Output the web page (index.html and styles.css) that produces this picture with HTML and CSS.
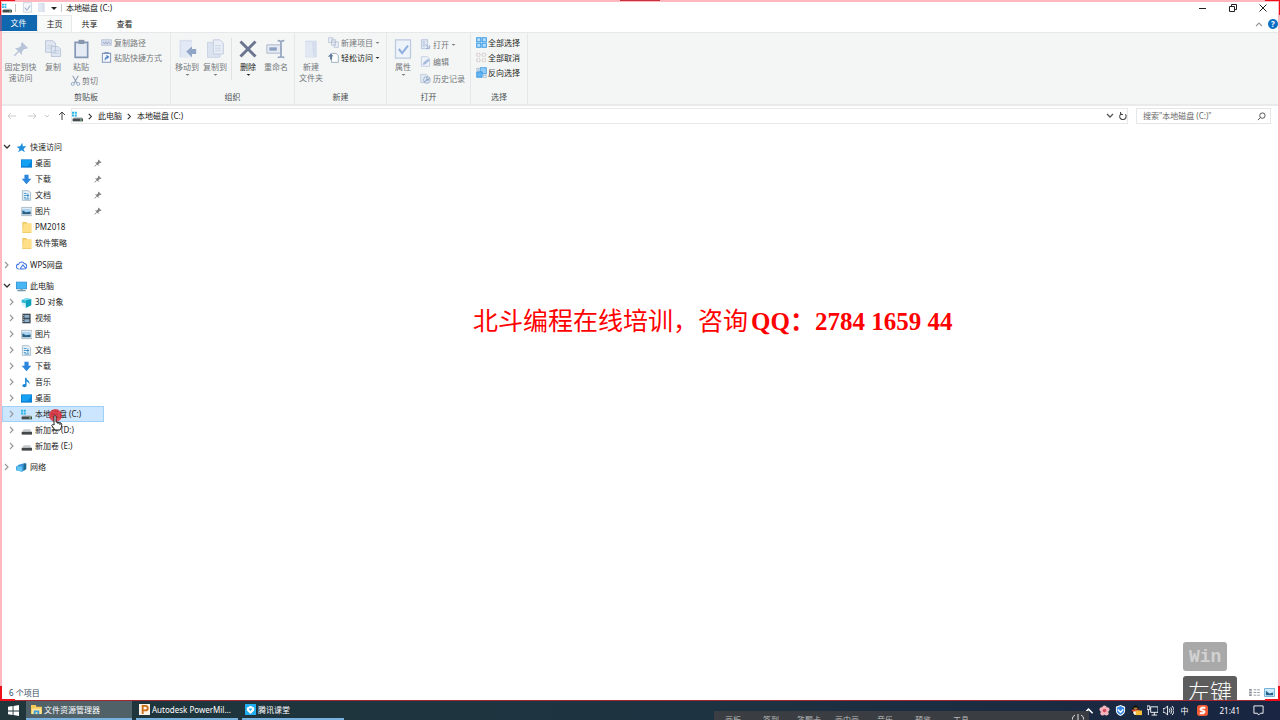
FILE: index.html
```html
<!DOCTYPE html>
<html lang="zh-CN">
<head>
<meta charset="utf-8">
<title>本地磁盘 (C:)</title>
<link rel="stylesheet" href="styles.css">
</head>
<body>
<svg class="defs" aria-hidden="true">
  <symbol id="drive-c" viewBox="0 0 16 16"><path d="M0 1h3v3H0zM4 1h3v3H4zM0 5h3v3H0zM4 5h3v3H4z" fill="#25b5e8"/><path d="M3 9h11l2 3v3H1v-3z" fill="#b9bec1"/><path d="M1 11h15v4H1z" fill="#454a4d"/><path d="M12 12h2v2h-2z" fill="#7de08b"/></symbol>
  <symbol id="drive" viewBox="0 0 16 16"><path d="M4 6h9l3 5H1z" fill="#c5c9cb"/><path d="M1 10h15v4H1z" fill="#42474a"/></symbol>
  <symbol id="star" viewBox="0 0 16 16"><path d="M9 1l1 5 5 0-4 4 2 5-5-3-5 3 2-5-4-3 5-1z" fill="#2190dd"/></symbol>
  <symbol id="desktop" viewBox="0 0 16 16"><path d="M0 2h16v12H0z" fill="#087bd2"/><path d="M1 3h14v9H1z" fill="#16a2f3"/><path d="M9 12L15 5v7z" fill="#0788dc"/></symbol>
  <symbol id="download" viewBox="0 0 16 16"><path d="M5 1h6v6h4l-7 8-7-8h4z" fill="#2b86dd"/></symbol>
  <symbol id="document" viewBox="0 0 16 16"><path d="M2 1h9l3 3v11H2z" fill="#e9f4fa" stroke="#89a4b5"/><path d="M4 5h4M4 8h8M4 11h3M10 5v7M5 13h7" stroke="#3d8dc2" stroke-width="1.3" fill="none"/></symbol>
  <symbol id="picture" viewBox="0 0 16 16"><path d="M1 2h15v12H1z" fill="#f3f7f9" stroke="#8ea0ac"/><path d="M2 4h12v8H2z" fill="#a8d3f3"/><path d="M2 6l5 3 7-1v4H2z" fill="#2a6083"/></symbol>
  <symbol id="folder" viewBox="0 0 16 16"><path d="M2 0h6l1 2h6v14H2z" fill="#edc75e"/><path d="M4 2h11v13H2z" fill="#ffdf87"/></symbol>
  <symbol id="cloud" viewBox="0 0 16 16"><path d="M4 13a3.5 3.5 0 010-7 4.500 4.500 0 018-1 4 4 0 01-1 8H6l4-6 4 5" fill="none" stroke="#3a75e2" stroke-width="1.5"/></symbol>
  <symbol id="pc" viewBox="0 0 16 16"><path d="M0 1h16v11H0z" fill="#3b92cb"/><path d="M1 2h14v9H1z" fill="#48b5f5"/><path d="M6 12h4v1h4v2H2v-2h4z" fill="#7a95a5"/></symbol>
  <symbol id="cube" viewBox="0 0 16 16"><path d="M1 4l7-3 7 2-6 3z" fill="#79d9ec"/><path d="M1 4l8 2v9l-8-3z" fill="#d5f3f8"/><path d="M7 5l8-2v9l-8 4z" fill="#0ca1be"/><path d="M1 4l6 1v4l-6-1z" fill="#2cb7d4"/></symbol>
  <symbol id="video" viewBox="0 0 16 16"><path d="M2 1h12v14H2z" fill="#414b55"/><path d="M5 3h7v4H5zM5 9h7v4H5z" fill="#8bb1ce"/><path d="M3 3h1v1H3zM3 6h1v1H3zM3 9h1v1H3zM3 12h1v1H3z" fill="#fff"/></symbol>
  <symbol id="music" viewBox="0 0 16 16"><path d="M7 1v11" stroke="#1686d9" stroke-width="2"/><ellipse cx="5" cy="12.500" rx="3" ry="2.500" fill="#1686d9"/><path d="M7 1c1 4 7 4 5 10 0-3-2-4-5-5z" fill="#1686d9"/></symbol>
  <symbol id="network" viewBox="0 0 16 16"><path d="M4 4l10-3v9l-5 4-9-2V7z" fill="#3a96d8"/><path d="M1 6l8 1v7l-8-2z" fill="#63c7f5"/><path d="M11 3l4-1v8l-4 3z" fill="#20698e"/></symbol>
  <symbol id="pin" viewBox="0 0 16 16"><path d="M9 1l6 6-2 1-2 0-2 3 0 3-3-3-4 4-1 0 0-1 4-4-3-3 3 0 3-2 0-2z" fill="currentColor"/></symbol>
  <symbol id="right" viewBox="0 0 8 8"><path d="M2 1l3 3-3 3" fill="none" stroke="currentColor" stroke-width="1.200"/></symbol>
  <symbol id="down" viewBox="0 0 8 8"><path d="M1 2l3 3 3-3" fill="none" stroke="currentColor" stroke-width="1.300"/></symbol>
  <symbol id="up" viewBox="0 0 8 8"><path d="M1 6l3-3 3 3" fill="none" stroke="currentColor" stroke-width="1.100"/></symbol>
  <symbol id="caret" viewBox="0 0 8 8"><path d="M1 3h6L4 6z" fill="currentColor"/></symbol>
  <symbol id="copy" viewBox="0 0 24 24"><path d="M3 2h9l3 3v11H3zM10 9h8l3 3v9H10z" fill="#dfe6f1" stroke="#b5c1d5"/><path d="M5 8h7M5 11h5M12 14h7M12 17h7" stroke="#becbdf"/></symbol>
  <symbol id="paste" viewBox="0 0 24 24"><path d="M5 4h15v18H5z" fill="#e5ebf5" stroke="#8496b5" stroke-width="2"/><path d="M9 1h7v5H9z" fill="#8796ad"/></symbol>
  <symbol id="copypath" viewBox="0 0 16 16"><path d="M1 4h14v8H1z" fill="#d8e0f0" stroke="#a9b5cf"/><path d="M3 7l2 3 2-3 2 3 2-3 2 3" fill="none" stroke="#8594b5"/></symbol>
  <symbol id="shortcut" viewBox="0 0 16 16"><path d="M2 2h12v13H2z" fill="#f4f8fd" stroke="#8297be" stroke-width="1.500"/><path d="M5 0h6v3H5z" fill="#8297be"/><path d="M6 12c0-4 1-5 4-5M8 5l3 2-3 3" fill="none" stroke="#4c7fc3" stroke-width="1.500"/></symbol>
  <symbol id="cut" viewBox="0 0 16 16"><path d="M4 1l6 11M12 1L6 12" fill="none" stroke="#8d9cb4" stroke-width="1.500"/><circle cx="4" cy="13" r="2.200" fill="none" stroke="#8fa5c8" stroke-width="1.300"/><circle cx="12" cy="13" r="2.200" fill="none" stroke="#8fa5c8" stroke-width="1.300"/></symbol>
  <symbol id="moveto" viewBox="0 0 24 24"><path d="M3 1h15v21H3z" fill="#d8e0ee"/><path d="M5 3h13v19H5z" fill="#e3e9f4"/><path d="M23 12v6h-5v4l-7-7 7-6v3z" fill="#91a5c6"/></symbol>
  <symbol id="copyto" viewBox="0 0 24 24"><path d="M3 4h15v18H3z" fill="#dbe3f0" stroke="#c6d0e2"/><path d="M10 1h8l4 4v13H10z" fill="#e9eef7" stroke="#b9c6dc"/><path d="M12 8h7M12 11h7M12 14h7" stroke="#c2cee1"/></symbol>
  <symbol id="delete" viewBox="0 0 24 24"><path d="M3 3l18 18M21 3L3 21" stroke="#6b7590" stroke-width="3.500"/></symbol>
  <symbol id="rename" viewBox="0 0 24 24"><path d="M1 7h17v10H1z" fill="#e5eaf3" stroke="#a2afc7"/><path d="M4 10h9v4H4z" fill="#8da1c3"/><path d="M14 2c3 0 4 1 4 2 0-1 2-2 4-2M18 3v17M14 22c3 0 4-1 4-2 0 1 2 2 4 2" fill="none" stroke="#95a5bf" stroke-width="2"/></symbol>
  <symbol id="newfolder" viewBox="0 0 24 24"><path d="M5 2h14v20H5z" fill="#d6deed"/><path d="M5 4h8l2 19-10-3z" fill="#e2e8f3"/></symbol>
  <symbol id="newitem" viewBox="0 0 16 16"><path d="M1 1h6v7H1zM5 4h6v8H5zM9 7h6v8H9z" fill="#edf1f7" stroke="#a9b8ce"/></symbol>
  <symbol id="access" viewBox="0 0 16 16"><path d="M5 2h7l3 3v10H5z" fill="#fff" stroke="#7d8fa8"/><path d="M0 7l4-5 4 4H6v5H3V7z" fill="#637b9c"/></symbol>
  <symbol id="properties" viewBox="0 0 24 24"><path d="M3 1h18v22H3z" fill="#eef3fa" stroke="#bccadf" stroke-width="1.500"/><path d="M7 12l4 5 7-9" fill="none" stroke="#8fb0df" stroke-width="2.500"/></symbol>
  <symbol id="open" viewBox="0 0 16 16"><path d="M2 1h9v13H2z" fill="#dfe7f4" stroke="#a5b6d4"/><path d="M4 4h3M4 7h3M4 10h3" stroke="#8fa4c9"/><path d="M8 8l6 5M14 9v5H9" stroke="#8298c0" fill="none"/></symbol>
  <symbol id="edit" viewBox="0 0 16 16"><path d="M2 1h9l3 3v11H2z" fill="#eef2f8" stroke="#b4c2d9"/><path d="M4 13l1-4 7-5 2 2-6 6z" fill="#a4b9dc"/></symbol>
  <symbol id="history" viewBox="0 0 16 16"><path d="M1 2h8l2 2v10H1z" fill="#e3e9f3" stroke="#b3bfd3"/><circle cx="10" cy="10" r="5" fill="#d9e5f2" stroke="#8ea5c2"/><path d="M10 6v4h3M6 13l8-5" stroke="#738aac" fill="none"/></symbol>
  <symbol id="selectall" viewBox="0 0 16 16"><path d="M1 1h6v6H1zM9 1h6v6H9zM1 9h6v6H1zM9 9h6v6H9z" fill="#b4dfff" stroke="#3b9be4" stroke-width="1.500"/></symbol>
  <symbol id="selectnone" viewBox="0 0 16 16"><path d="M1 2h5v4H1zM9 2h5v4H9zM1 10h5v4H1zM9 10h5v4H9z" fill="#f9f9f9" stroke="#baa9a9" stroke-dasharray="2 1"/></symbol>
  <symbol id="invert" viewBox="0 0 16 16"><path d="M6 1h9v9H6z" fill="#91ccfa" stroke="#2989d5"/><path d="M1 7h8v8H1z" fill="#62b6f5" stroke="#2989d5"/><path d="M1 2h3v3H1zM11 12h4v3h-4z" fill="#fff" stroke="#89abc5"/></symbol>
  <symbol id="checkdoc" viewBox="0 0 16 16"><path d="M2 1h12v14H2z" fill="#f4f6fa" stroke="#bac7d7"/><path d="M4 8l3 4 5-7" fill="none" stroke="#9ab0d0" stroke-width="1.500"/></symbol>
</svg>

<div class="screen">
  <section class="window">
    <header class="titlebar">
      <svg class="icon"><use href="#drive-c"/></svg><span class="bar"></span>
      <button class="quick" aria-label="属性"><svg class="icon"><use href="#checkdoc"/></svg></button>
      <button class="quick" aria-label="新建文件夹"><svg class="icon"><use href="#newfolder"/></svg></button>
      <button class="quick narrow" aria-label="自定义"><svg class="chev"><use href="#caret"/></svg></button>
      <span class="bar last"></span><h1>本地磁盘 (C:)</h1>
      <div class="controls">
        <button aria-label="最小化"><svg viewBox="0 0 8 8"><path d="M0 4.500h7" stroke="#222"/></svg></button>
        <button aria-label="还原"><svg viewBox="0 0 8 8"><path d="M.5 2.500h5v5h-5zM2.500 2V.500h5v5H6" fill="none" stroke="#222"/></svg></button>
        <button aria-label="关闭"><svg viewBox="0 0 8 8"><path d="M.5.500l7 7M7.500.500l-7 7" stroke="#222" fill="none"/></svg></button>
      </div>
    </header>

    <nav class="tabs">
      <button class="file">文件</button><button class="current">主页</button><button>共享</button><button>查看</button>
      <div class="help"><button aria-label="折叠功能区"><svg class="chev"><use href="#up"/></svg></button><button class="question" aria-label="帮助">?</button></div>
    </nav>

    <div class="ribbon">
      <section class="group clip">
        <div class="tools">
          <button class="big wide"><svg class="pinned"><use href="#pin"/></svg><span>固定到快<br>速访问</span></button>
          <button class="big"><svg><use href="#copy"/></svg><span>复制</span></button>
          <div class="stack">
            <button class="big"><svg><use href="#paste"/></svg><span>粘贴</span></button>
            <button class="small"><svg class="icon"><use href="#cut"/></svg>剪切</button>
          </div>
          <div class="stack">
            <button class="small"><svg class="icon"><use href="#copypath"/></svg>复制路径</button>
            <button class="small"><svg class="icon"><use href="#shortcut"/></svg>粘贴快捷方式</button>
          </div>
        </div>
        <h2>剪贴板</h2>
      </section>
      <section class="group organize">
        <div class="tools">
          <button class="big"><svg><use href="#moveto"/></svg><span>移动到</span><svg class="arrow"><use href="#caret"/></svg></button>
          <button class="big"><svg><use href="#copyto"/></svg><span>复制到</span><svg class="arrow"><use href="#caret"/></svg></button>
          <span class="divider"></span>
          <button class="big dark"><svg><use href="#delete"/></svg><span>删除</span><svg class="arrow"><use href="#caret"/></svg></button>
          <button class="big"><svg><use href="#rename"/></svg><span>重命名</span></button>
        </div>
        <h2>组织</h2>
      </section>
      <section class="group create">
        <div class="tools">
          <button class="big"><svg><use href="#newfolder"/></svg><span>新建<br>文件夹</span></button>
          <div class="stack">
            <button class="small"><svg class="icon"><use href="#newitem"/></svg>新建项目<svg class="arrow"><use href="#caret"/></svg></button>
            <button class="small dark"><svg class="icon"><use href="#access"/></svg>轻松访问<svg class="arrow"><use href="#caret"/></svg></button>
          </div>
        </div>
        <h2>新建</h2>
      </section>
      <section class="group opening">
        <div class="tools">
          <button class="big"><svg><use href="#properties"/></svg><span>属性</span><svg class="arrow"><use href="#caret"/></svg></button>
          <div class="stack airy">
            <button class="small"><svg class="icon"><use href="#open"/></svg>打开<svg class="arrow"><use href="#caret"/></svg></button>
            <button class="small"><svg class="icon"><use href="#edit"/></svg>编辑</button>
            <button class="small"><svg class="icon"><use href="#history"/></svg>历史记录</button>
          </div>
        </div>
        <h2>打开</h2>
      </section>
      <section class="group selecting">
        <div class="tools">
          <div class="stack">
            <button class="small dark"><svg class="icon"><use href="#selectall"/></svg>全部选择</button>
            <button class="small dark"><svg class="icon"><use href="#selectnone"/></svg>全部取消</button>
            <button class="small dark"><svg class="icon"><use href="#invert"/></svg>反向选择</button>
          </div>
        </div>
        <h2>选择</h2>
      </section>
    </div>

    <div class="location">
      <div class="history">
        <button aria-label="后退"><svg viewBox="0 0 10 10"><path d="M9 5H1M4 2L1 5l3 3"/></svg></button>
        <button aria-label="前进"><svg viewBox="0 0 10 10"><path d="M1 5h8M6 2l3 3-3 3"/></svg></button>
        <button class="recent" aria-label="最近位置"><svg viewBox="0 0 10 10"><path d="M3 4l2 2 2-2"/></svg></button>
        <button class="parent" aria-label="上一级"><svg viewBox="0 0 10 10"><path d="M5 9V1M2 4l3-3 3 3"/></svg></button>
      </div>
      <div class="address">
        <svg class="icon"><use href="#drive-c"/></svg><svg class="chev"><use href="#right"/></svg>
        <a href="#pc">此电脑</a><svg class="chev"><use href="#right"/></svg><a href="#c">本地磁盘 (C:)</a>
        <button class="first" aria-label="展开地址"><svg><use href="#down"/></svg></button>
        <button aria-label="刷新"><svg viewBox="0 0 10 10"><path d="M3 2a4 4 0 105 1M2 0v3h3" fill="none" stroke="#444" stroke-width="1.300"/></svg></button>
      </div>
      <label class="search"><input type="text" aria-label="搜索" placeholder='搜索"本地磁盘 (C:)"'><svg viewBox="0 0 10 10"><circle cx="6" cy="4" r="3"/><path d="M4 6L1 9"/></svg></label>
    </div>

    <div class="content">
      <nav class="tree" aria-label="导航窗格">
        <ul>
          <li><a href="#q"><svg class="chev open"><use href="#down"/></svg><svg class="icon"><use href="#star"/></svg>快速访问</a></li>
          <li class="sub"><a href="#q1"><svg class="icon"><use href="#desktop"/></svg>桌面<svg class="tack"><use href="#pin"/></svg></a></li>
          <li class="sub"><a href="#q2"><svg class="icon"><use href="#download"/></svg>下载<svg class="tack"><use href="#pin"/></svg></a></li>
          <li class="sub"><a href="#q3"><svg class="icon"><use href="#document"/></svg>文档<svg class="tack"><use href="#pin"/></svg></a></li>
          <li class="sub"><a href="#q4"><svg class="icon"><use href="#picture"/></svg>图片<svg class="tack"><use href="#pin"/></svg></a></li>
          <li class="sub"><a href="#q5"><svg class="icon"><use href="#folder"/></svg>PM2018</a></li>
          <li class="sub"><a href="#q6"><svg class="icon"><use href="#folder"/></svg>软件策略</a></li>
        </ul>
        <ul><li><a href="#wps"><svg class="chev"><use href="#right"/></svg><svg class="icon"><use href="#cloud"/></svg>WPS网盘</a></li></ul>
        <ul>
          <li><a href="#pc"><svg class="chev open"><use href="#down"/></svg><svg class="icon"><use href="#pc"/></svg>此电脑</a></li>
          <li class="branch"><a href="#p1"><svg class="chev"><use href="#right"/></svg><svg class="icon"><use href="#cube"/></svg>3D 对象</a></li>
          <li class="branch"><a href="#p2"><svg class="chev"><use href="#right"/></svg><svg class="icon"><use href="#video"/></svg>视频</a></li>
          <li class="branch"><a href="#p3"><svg class="chev"><use href="#right"/></svg><svg class="icon"><use href="#picture"/></svg>图片</a></li>
          <li class="branch"><a href="#p4"><svg class="chev"><use href="#right"/></svg><svg class="icon"><use href="#document"/></svg>文档</a></li>
          <li class="branch"><a href="#p5"><svg class="chev"><use href="#right"/></svg><svg class="icon"><use href="#download"/></svg>下载</a></li>
          <li class="branch"><a href="#p6"><svg class="chev"><use href="#right"/></svg><svg class="icon"><use href="#music"/></svg>音乐</a></li>
          <li class="branch"><a href="#p7"><svg class="chev"><use href="#right"/></svg><svg class="icon"><use href="#desktop"/></svg>桌面</a></li>
          <li class="branch selected"><a href="#c"><svg class="chev"><use href="#right"/></svg><svg class="icon"><use href="#drive-c"/></svg>本地磁盘 (C:)</a></li>
          <li class="branch"><a href="#d"><svg class="chev"><use href="#right"/></svg><svg class="icon"><use href="#drive"/></svg>新加卷 (D:)</a></li>
          <li class="branch"><a href="#e"><svg class="chev"><use href="#right"/></svg><svg class="icon"><use href="#drive"/></svg>新加卷 (E:)</a></li>
        </ul>
        <ul><li><a href="#net"><svg class="chev"><use href="#right"/></svg><svg class="icon"><use href="#network"/></svg>网络</a></li></ul>
      </nav>
      <main></main>
    </div>

    <footer class="status">
      <span>6 个项目</span>
      <button aria-label="详细信息"><svg viewBox="0 0 12 10"><path d="M0 1h3v2H0zM0 4h3v2H0zM0 7h3v2H0z" fill="#8b949c"/><path d="M5 2h3M9 2h3M5 5h3M9 5h3M5 8h3M9 8h3" stroke="#8b949c"/></svg></button>
      <button aria-label="大图标"><svg viewBox="0 0 12 10"><path d="M.5.500h11v9H.500z" fill="#cfeafa" stroke="#64a9d1"/><path d="M2 3l4 3 4-1v3H2z" fill="#21658e"/></svg></button>
    </footer>

    <p class="watermark">北斗编程在线培训，咨询<b>QQ：2784 1659 44</b></p>
    <div class="keys"><kbd class="fading">Win</kbd><kbd>左键</kbd></div>
    <div class="frame"><i class="mark tl"></i><i class="mark tr"></i><i class="mark bl"></i><i class="mark br"></i><i class="mark top"></i></div>
    <span class="click"></span>
    <svg class="cursor" viewBox="0 0 12 16"><path d="M3 2c0-2 2-2 2 0v5l5 1c1 1 1 2 0 5l-1 2H4L1 11c-1-1 1-2 2-1z" fill="#fff" stroke="#222"/><path d="M7 7v2M9 8v2" stroke="#222"/></svg>
  </section>

  <footer class="taskbar">
    <button class="start" aria-label="开始"><svg viewBox="0 0 12 12"><path d="M0 2l5-1v5H0zM6 1l6-1v6H6zM0 7h5v4l-5-1zM6 7h6v5l-6-1z" fill="#fff"/></svg></button>
    <button class="task active"><svg viewBox="0 0 12 12"><path d="M0 1h5l1 2h6v8H0z" fill="#f6cb58"/><path d="M1 5h10v6H1z" fill="#ffe59a"/><path d="M3 7h6v4H7V9H5v2H3z" fill="#3c9dd8"/></svg><span>文件资源管理器</span></button>
    <button class="task"><svg viewBox="0 0 12 12"><path d="M0 0h12v12H0z" fill="#fff3e5"/><path d="M4 11V2h3a2.500 2.500 0 010 5H4" fill="none" stroke="#c86d13" stroke-width="2"/></svg><span>Autodesk PowerMil...</span></button>
    <button class="task"><svg viewBox="0 0 12 12"><path d="M0 0h12v12H0z" fill="#20aef0"/><path d="M2 4l4-2 4 2v3l-4 4-4-4z" fill="#fff"/><path d="M4 5h4L6 8z" fill="#20aef0"/></svg><span>腾讯课堂</span></button>
    <div class="tray">
      <button aria-label="显示隐藏的图标"><svg class="chev"><use href="#up"/></svg></button>
      <button aria-label="花"><svg viewBox="0 0 12 12"><g fill="#f5b5bd"><circle cx="6" cy="3" r="2.500"/><circle cx="3" cy="5" r="2.500"/><circle cx="9" cy="5" r="2.500"/><circle cx="4" cy="9" r="2.500"/><circle cx="8" cy="9" r="2.500"/></g><circle cx="6" cy="6" r="2" fill="#d94c60"/></svg></button>
      <button aria-label="安全"><svg viewBox="0 0 12 12"><path d="M6 0l5 2v4q0 4-5 6-5-2-5-6V2z" fill="#fff"/><path d="M6 1l4 2v3q0 3-4 5-4-2-4-5V3z" fill="#3488e6"/><path d="M3 5l3 3 3-3" fill="none" stroke="#fff" stroke-width="1.500"/></svg></button>
      <button aria-label="QQ"><svg viewBox="0 0 12 12"><ellipse cx="5" cy="6" rx="4" ry="5.500" fill="#101010"/><ellipse cx="5" cy="8" rx="2.500" ry="3" fill="#fff"/><path d="M1 5h8v2H1z" fill="#e54632"/><path d="M5 6h7v5H5z" fill="#f5bd38"/><path d="M3 3h4v1H3z" fill="#f5bd38"/></svg></button>
      <button aria-label="网络"><svg viewBox="0 0 12 12"><path d="M4 2h8v6H4zM8 8v3M5 11h6M0 1h3v4H0zM1.500 5v6" fill="none" stroke="#fff"/></svg></button>
      <button aria-label="音量"><svg viewBox="0 0 12 12"><path d="M0 4h2l3-3v10L2 8H0zM7 4q1 2 0 4M8.500 2.500q2.500 3.500 0 7M10 1q4 5 0 10" fill="none" stroke="#fff"/></svg></button>
      <button>中</button>
      <button class="sogou" aria-label="搜狗输入法"><svg viewBox="0 0 12 12"><rect width="12" height="12" rx="3" fill="#f05a34"/><path d="M9 3H5q-3 2 1 3 4 1 1 3H3" fill="none" stroke="#fff" stroke-width="2"/></svg></button>
      <time>21:41</time>
      <button class="notice" aria-label="通知"><svg viewBox="0 0 12 12"><path d="M1 1h10v8H8l-2 2-1-2H1z" fill="none" stroke="#fff"/></svg></button>
    </div>
    <div class="dock"><span>画板</span><span>签到</span><span>答题卡</span><span>画中画</span><span>音乐</span><span>预览</span><span>工具</span><svg viewBox="0 0 12 12"><path d="M3 1a5 5 0 000 9M9 1a5 5 0 010 9M6 0v8" fill="none" stroke="#ddd"/></svg></div>
  </footer>
</div>
</body>
</html>
```
FILE: styles.css
```css
* { box-sizing: border-box; }

body {
  margin: 0;
  font: 8px/12px "Noto Sans", "Noto Sans CJK SC", sans-serif;
  color: #222;
  background: #fff;
}

h1, h2, p, ul { margin: 0; padding: 0; font: inherit; }
ul { list-style: none; }
a { color: inherit; text-decoration: none; }
button {
  display: flex;
  align-items: center;
  justify-content: center;
  padding: 0;
  border: 0;
  background: none;
  color: inherit;
  font: inherit;
  white-space: nowrap;
}
svg { flex: none; }

.defs { position: absolute; width: 0; height: 0; }
.icon { width: 11px; height: 11px; }
.chev { width: 8px; height: 8px; }
.arrow { width: 5px; height: 5px; }

.screen { display: flex; flex-direction: column; height: 100vh; overflow: hidden; }
.window { position: relative; display: flex; flex: 1; flex-direction: column; min-height: 0; overflow: hidden; padding: 0 2px; }

.titlebar { display: flex; align-items: center; flex: none; height: 15px; }
.titlebar > .icon { width: 10px; height: 10px; }
.titlebar .bar { width: 1px; height: 8px; margin: 0 4px 0 3px; background: #c5c5c5; }
.titlebar .last { margin-left: 1px; }
.quick { width: 14px; }
.quick.narrow { width: 12px; }
.controls { display: flex; margin-left: auto; }
.controls button { width: 30px; }
.controls svg { width: 8px; height: 8px; }

.tabs { display: flex; flex: none; height: 17px; margin-left: -2px; }
.tabs > button { width: 35px; }
.tabs > .file { width: 37px; height: 16px; color: #fff; background: #0f67b0; }
.tabs > .current { border: 1px solid #e7e8e9; border-bottom: 0; background: #f8f9f9; }
.help { display: flex; align-items: center; gap: 5px; margin-left: auto; color: #999; }
.question { width: 10px; height: 10px; border-radius: 50%; background: #0b6fc4; color: #fff; font-weight: bold; }

.ribbon { display: flex; flex: none; height: 74px; border-top: 1px solid #e6e8e9; border-bottom: 2px solid #e8eaeb; background: #f4f6f6; color: #75787b; }
.group { display: flex; flex-direction: column; flex: none; padding: 2px 0 1px; border-right: 1px solid #e5e8e9; }
.group h2 { color: #4d5154; text-align: center; }
.tools { display: flex; flex: 1; }
.clip { width: 169px; }
.organize { width: 124px; }
.organize .tools { padding-left: 2px; }
.create { width: 92px; }
.opening { width: 84px; }
.selecting { width: 57px; }
.big { flex-direction: column; justify-content: flex-start; align-self: flex-start; width: 28px; padding-top: 2px; line-height: 11px; }
.big > svg:first-child { width: 20px; height: 20px; margin: 2px 0; }
.big > svg.pinned:first-child { width: 16px; color: #b8c5d9; }
.big.wide { width: 37px; }
.dark { color: #1c1e20; }
.stack { display: flex; flex-direction: column; }
.stack.airy { gap: 2px; padding-top: 2px; }
.small { justify-content: flex-start; gap: 2px; height: 15px; padding-left: 3px; }
.big + .small { height: 17px; gap: 1px; }
.create .big, .opening .big { width: 32px; }
.create .small, .opening .small { padding-left: 1px; }
.selecting .small { gap: 1px; padding-left: 5px; }
.divider { width: 1px; height: 42px; margin: 3px 2px; background: #e0e3e5; }

.location { display: flex; flex: none; gap: 8px; padding: 2px 7px 0 5px; }
.history { display: flex; gap: 10px; width: 56px; color: #ccc; }
.history svg { width: 10px; height: 10px; fill: none; stroke: currentColor; }
.history .recent { margin: 0 -5px; }
.history .parent { color: #444; }
.address { display: flex; flex: 1; align-items: center; gap: 4px; height: 16px; border: 1px solid #e9e9e9; }
.address .chev { width: 7px; height: 7px; }
.address button { width: 9px; }
.address button svg { width: 8px; height: 8px; }
.address .first { margin-left: auto; color: #555; }
.search { display: flex; align-items: center; width: 135px; height: 16px; padding: 0 4px 0 6px; border: 1px solid #e6e6e6; }
.search input { flex: 1; min-width: 0; padding: 0; border: 0; outline: 0; background: none; font: inherit; }
.search input::placeholder { color: #6b6b6b; }
.search svg { width: 9px; height: 9px; fill: none; stroke: #444; }

.content { display: flex; flex: 1; min-height: 0; padding-top: 15px; }
.tree { display: flex; flex-direction: column; flex: none; gap: 5px; width: 102px; }
.tree ul:first-child { margin-bottom: 1px; }
.tree a { display: flex; align-items: center; gap: 3px; height: 16px; padding-left: 1px; }
.tree .chev { margin-right: 2px; color: #999; }
.tree .open { color: #333; }
.tree .sub a { padding-left: 19px; }
.tree .branch a { padding-left: 6px; }
.tree .selected { background: #cce6ff; outline: 1px solid #9fd0f8; outline-offset: -1px; }
.tack { width: 8px; height: 8px; margin: 0 2px 0 auto; color: #848484; }
main { flex: 1; }

.status { display: flex; align-items: center; flex: none; gap: 4px; height: 17px; padding: 0 3px 0 7px; color: #334b60; }
.status span { margin-right: auto; }
.status svg { width: 11px; height: 9px; }

.watermark { position: absolute; left: 473px; top: 307px; color: #f00; font: 400 25px/30px "Liberation Serif", "Noto Sans CJK SC", serif; white-space: nowrap; }
.watermark b { margin-left: 3px; }
.keys { position: absolute; top: 642px; right: 43px; display: flex; flex-direction: column; align-items: flex-start; gap: 5px; }
.keys kbd { padding: 0 5px; border-radius: 3px; color: #fff; background: #5d5d5d; font: 300 22px/29px "Noto Sans CJK SC", sans-serif; }
.keys .fading { padding: 1px 6px 0; color: #d2d2d2; background: #a9a9a9; font: bold 18px/28px "Liberation Mono", monospace; }

.frame { position: absolute; inset: 0; border: 2px solid rgb(255 80 100 / 40%); border-bottom: 1px solid #a32632; pointer-events: none; }
.mark { position: absolute; border: 0 solid #ee1018; width: 15px; height: 15px; }
.tl { left: -2px; top: -2px; border-width: 1px 0 0 1px; }
.tr { right: -2px; top: -2px; border-width: 1px 1px 0 0; }
.bl { left: -2px; bottom: -1px; border-width: 0 0 2px 2px; }
.br { right: -2px; bottom: -1px; border-width: 0 2px 2px 0; }
.top { left: 50%; top: -2px; width: 40px; height: 1px; margin-left: -20px; background: #c9303c; }
.click { position: absolute; left: 49px; top: 409px; width: 13px; height: 13px; border-radius: 50%; background: rgb(226 40 50 / 80%); }
.cursor { position: absolute; left: 51px; top: 415px; width: 12px; height: 16px; }

.taskbar { position: relative; display: flex; flex: none; height: 19px; overflow: hidden; color: #fff; background: linear-gradient(90deg, #20363b, #1d3341 55%, #192542); }
.start { width: 26px; }
.start svg, .task svg { width: 11px; height: 11px; }
.task { justify-content: flex-start; gap: 2px; width: 102px; margin-left: 4px; padding-left: 3px; border-bottom: 2px solid #78b2de; }
.task.active { width: 106px; margin-left: 0; padding-left: 5px; background: #506268; }
.tray { display: flex; align-items: center; margin-left: auto; padding-right: 14px; }
.tray button { width: 16px; }
.tray svg { width: 11px; height: 11px; }
.tray .sogou { width: 20px; }
.tray time { margin: 0 10px 0 7px; }
.dock { position: absolute; left: 714px; top: 10px; display: flex; width: 375px; height: 18px; padding: 3px 5px 0 0; background: #3a3e42; color: #bbb; }
.dock span { width: 38px; text-align: center; }
.dock svg { width: 12px; height: 12px; margin-left: auto; }
```
